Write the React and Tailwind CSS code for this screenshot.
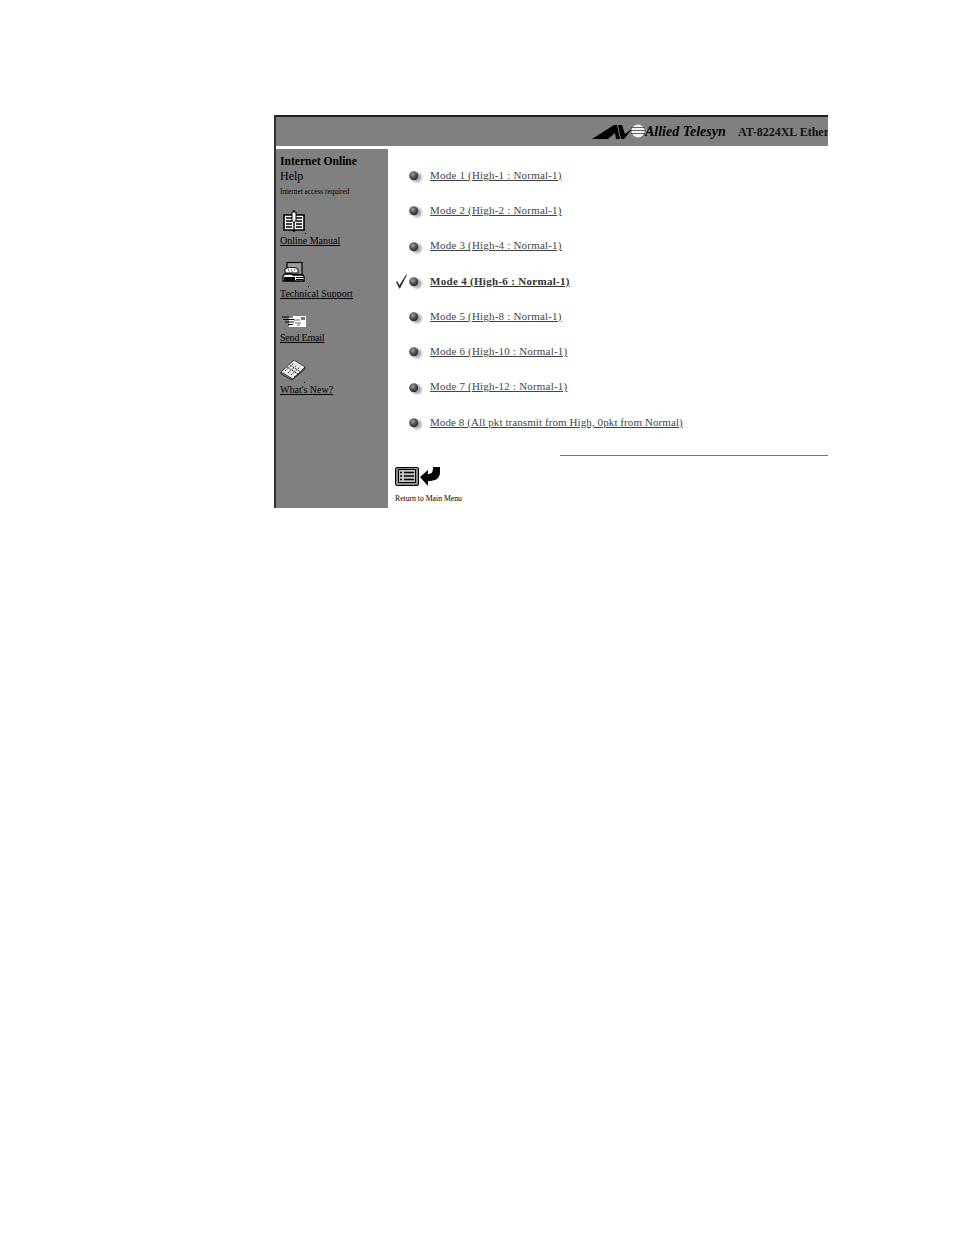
const modes = [
  'Mode 1 (High-1 : Normal-1)',
  'Mode 2 (High-2 : Normal-1)',
  'Mode 3 (High-4 : Normal-1)',
  'Mode 4 (High-6 : Normal-1)',
  'Mode 5 (High-8 : Normal-1)',
  'Mode 6 (High-10 : Normal-1)',
  'Mode 7 (High-12 : Normal-1)',
  'Mode 8 (All pkt transmit from High, 0pkt from Normal)',
];

function Bullet() {
  return (
    <svg width="18" height="18" viewBox="0 0 18 18" className="shrink-0">
      <defs>
        <radialGradient id="ball" cx="0.4" cy="0.35" r="0.7">
          <stop offset="0" stopColor="#a0a0a0" />
          <stop offset="0.5" stopColor="#555555" />
          <stop offset="1" stopColor="#222222" />
        </radialGradient>
        <radialGradient id="shade">
          <stop offset="0.4" stopColor="#a8a8a8" />
          <stop offset="1" stopColor="#ffffff" />
        </radialGradient>
      </defs>
      <circle cx="9" cy="11.500" r="6.500" fill="url(#shade)" />
      <circle cx="5.700" cy="9.700" r="4.500" fill="url(#ball)" />
    </svg>
  );
}

function Check() {
  return (
    <svg width="13" height="16" viewBox="0 0 13 16" className="shrink-0">
      <path d="M1 9l1.200-.8 2.300 3.800L11.200 1.500l.8.400L5 15.500h-.8z" fill="#333" />
    </svg>
  );
}

function BookIcon() {
  return (
    <svg width="22" height="22" viewBox="0 0 22 22" className="ml-[3px] overflow-visible">
      <path d="M1 5h9l1 1 1-1h9v15h-9l-1 1-1-1H1z" fill="#fff" stroke="#000" strokeWidth="1.600" />
      <path d="M11 0v20M3 8h6M3 11h6M3 14h6M3 17h6M13 8h6M13 11h6M13 14h6M13 17h6" stroke="#000" strokeWidth="1.300" />
      <path d="M9 2h4v8l-2 3-2-3z" fill="#fff" stroke="#000" />
      <rect x="22" y="23" width="1" height="1" fill="#000" />
    </svg>
  );
}

function PhoneIcon() {
  return (
    <svg width="23" height="20" viewBox="0 0 23 20" className="ml-[2px] overflow-visible">
      <rect x="5" y="0.500" width="15" height="12" fill="#9a9a9a" stroke="#000" strokeWidth="1.200" />
      <path d="M3 7c2-2 11-2 13 0v4H3z" fill="#fff" stroke="#000" />
      <path d="M6 8h1M9 8h1M12 8h1M7 10h1M10 10h1" stroke="#000" strokeWidth="1.200" />
      <path d="M1 19v-5l2-2h6l2 1h10l1 2v4z" fill="#fff" stroke="#000" strokeWidth="1.300" />
      <rect x="2" y="15" width="11" height="4" fill="#000" />
      <path d="M14 15.500h7M14 17.500h7" stroke="#000" />
      <rect x="26" y="24" width="1" height="1" fill="#000" />
    </svg>
  );
}

function MailIcon() {
  return (
    <svg width="24" height="11" viewBox="0 0 24 11" className="ml-[2px] overflow-visible">
      <path d="M7 0h17v11H7z" fill="#fff" />
      <path d="M0 1h11M1 3.500h11M3 6h9M6 8.500h5" stroke="#000" strokeWidth="1.100" />
      <path d="M12 4h6M13 7h6M15 9h3" fill="none" stroke="#666" />
      <rect x="19" y="1" width="4" height="3" fill="#777" />
      <rect x="28" y="15" width="1" height="1" fill="#000" />
    </svg>
  );
}

function NewsIcon() {
  return (
    <svg width="24" height="20" viewBox="0 0 24 20" className="ml-[1px] overflow-visible">
      <path d="M0 12L13 0l11 7-12 12z" fill="#e8e8e8" stroke="#222" strokeWidth="0.800" />
      <path d="M4 11l9-8M7 13l9-8M10 15l9-8M13 17l8-7M6 7l11 7M9 5l11 7" stroke="#444" strokeWidth="1" strokeDasharray="2 1" />
      <path d="M0 12v2l11 6 13-11V7" fill="none" stroke="#333" />
      <rect x="23" y="22" width="1" height="1" fill="#000" />
    </svg>
  );
}

function MenuIcon() {
  return (
    <svg width="46" height="21" viewBox="0 0 46 21">
      <rect x="0.500" y="1.500" width="23" height="18" rx="1.500" fill="#8c8c8c" stroke="#000" />
      <rect x="3.500" y="3.500" width="17" height="13" fill="#c4c4c4" stroke="#000" />
      <path d="M9 6.500h10M9 10h10M9 13.500h10M5 6.500h2M5 10h2M5 13.500h2" stroke="#000" strokeWidth="1.400" />
      <path d="M25 11l8-7v4c4 0 5-2 5-7h7v5c0 7-5 9-12 9v5z" fill="#000" />
    </svg>
  );
}

function Logo() {
  return (
    <svg width="54" height="16" viewBox="0 0 54 16" className="shrink-0">
      <path d="M1 15L23 1h3l3 14h-4l-1-6-7 6z" fill="#000" />
      <path d="M27 1h4l3 9 8-6-9 11h-3z" fill="#000" />
      <circle cx="47" cy="7" r="6.500" fill="#f0f0f0" />
      <path d="M40 3.500h14M40 6.500h14M40 9.500h14" stroke="#555" strokeWidth="0.900" />
    </svg>
  );
}

const helpLinks = [
  { label: 'Online Manual', icon: <BookIcon />, box: 'mt-[13px] h-[37px]' },
  { label: 'Technical Support', icon: <PhoneIcon />, box: 'mt-[15px] h-[38px]' },
  { label: 'Send Email', icon: <MailIcon />, box: 'mt-[16px] h-[28px] tracking-[-0.2px]' },
  { label: "What's New?", icon: <NewsIcon />, box: 'mt-[16px] h-[36px]' },
];

export default function App() {
  return (
    <div className="w-[954px] h-[1235px] bg-white font-['Liberation_Serif',serif] antialiased pt-[115px] pl-[274px] overflow-hidden">
      <div className="w-[554px] h-[393px] border-l-2 border-[#303030] flex flex-col">
        <div className="h-[31px] shrink-0 bg-[#808080] border-t-2 border-[#202020] flex items-center pl-[315px] overflow-hidden whitespace-nowrap">
          <Logo />
          <span className="w-[81px] shrink-0 text-[14px] font-bold italic text-black">Allied Telesyn</span>
          <span className="ml-[12px] text-[12px] font-bold text-[#111]">AT-8224XL Ether</span>
        </div>
        <div className="flex flex-1 mt-[3px] min-h-0">
          <aside className="w-[112px] shrink-0 bg-[#808080] pl-1 pt-[6px] text-black">
            <div className="text-[11.600px] leading-[14px] font-bold whitespace-nowrap">Internet Online</div>
            <div className="text-[12px] leading-[14px] font-medium">Help</div>
            <div className="text-[7.300px] leading-[10px] mt-[4px] whitespace-nowrap">Internet access required</div>
            {helpLinks.map((l) => (
              <div key={l.label} className={`${l.box} flex flex-col justify-between items-start`}>
                {l.icon}
                <a className="text-[10px] leading-[12px] underline whitespace-nowrap">{l.label}</a>
              </div>
            ))}
          </aside>
          <main className="flex-1 min-w-0 flex flex-col overflow-hidden pl-[7px]">
            <div className="mt-[8.600px] flex flex-col">
              {modes.map((m, i) => (
                <div key={m} className="h-[35.250px] flex items-center">
                  <span className="w-[13px] shrink-0 flex">{i === 3 && <Check />}</span>
                  <Bullet />
                  <a className={`ml-[4px] text-[11px] underline whitespace-nowrap ${i === 3 ? 'font-bold text-[#333] tracking-[0.3px]' : i === 7 ? 'text-[#444] tracking-[0.09px]' : 'text-[#444] tracking-[0.2px]'}`}>{m}</a>
                </div>
              ))}
            </div>
            <div className="ml-[165px] mt-[15px] h-px shrink-0 bg-[#777]" />
            <div className="mt-[10px] flex"><MenuIcon /></div>
            <div className="text-[7.700px] leading-[10px] mt-[7px] text-black whitespace-nowrap">Return to Main Menu</div>
          </main>
        </div>
      </div>
    </div>
  );
}
